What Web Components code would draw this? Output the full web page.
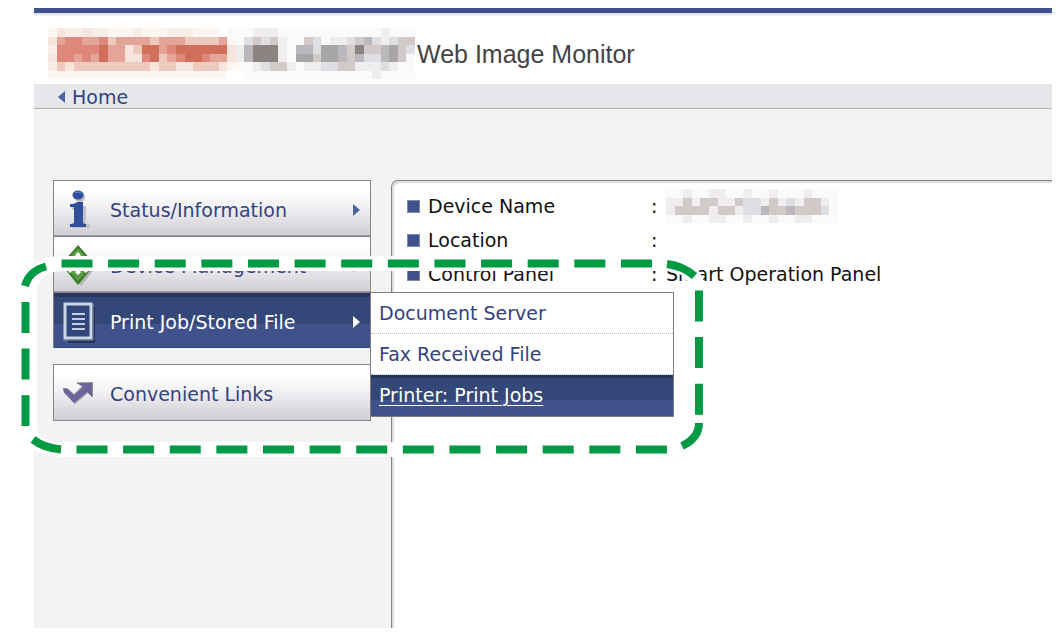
<!DOCTYPE html>
<html lang="en">
<head>
<meta charset="utf-8">
<title>Web Image Monitor</title>
<style>
  * { box-sizing: border-box; }
  body { margin: 0; background: #fff; color: #111; font: 19px/24px "DejaVu Sans", Verdana, sans-serif; }
</style>
</head>
<body>
<wim-page>
  <wim-header slot="header">
    <wim-mosaic slot="logo" kind="logo"></wim-mosaic>
    Web Image Monitor
  </wim-header>
  <wim-crumb slot="crumb" href="#home">Home</wim-crumb>
  <wim-menu slot="menu">
    <wim-menu-item href="#status" arrow>
      <svg slot="icon" width="34" height="40" viewBox="0 0 34 40" aria-hidden="true">
        <path d="M10 16h14v18h4v4H10v-4h4V20h-4z" fill="#c3c0c9"/>
        <circle cx="18" cy="7" r="5" fill="#b9b8c4"/>
        <ellipse cx="16" cy="5" rx="5.500" ry="4.500" fill="#31509c"/>
        <path d="M8 14q5 0 7-2h6v20q0 2 3 2v3H8v-3q4 0 4-2V17H8z" fill="#31509c"/>
        <path d="M13 3q3-2 6 0" stroke="#7189c1" fill="none"/>
      </svg>
      Status/Information
    </wim-menu-item>
    <wim-menu-item href="#device" arrow>
      <svg slot="icon" width="34" height="40" viewBox="0 0 34 40" aria-hidden="true">
        <path d="M19 3l15 18-15 19L4 22z" fill="#b5b3b8"/>
        <path d="M16-1l14 16v7L16 39 2 22v-7z" fill="#3d7e2d"/>
        <path d="M16 2l12 14v5L16 35 4 21v-5z" fill="#5c9c43"/>
        <path d="M16 6l3 3-3 3-3-3zM8 21l3 3-3 3-3-3zM24 21l3 3-3 3-3-3zM16 23l3 3-3 3-3-3z" fill="#fff"/>
      </svg>
      Device Management
    </wim-menu-item>
    <wim-menu-item href="#jobs" arrow active>
      <svg slot="icon" width="34" height="40" viewBox="0 0 34 40" aria-hidden="true">
        <path d="M6 5h27v36H6z" fill="#263459"/>
        <path d="M3 2h26v34H3z" fill="#31477c" stroke="#cbd8e5" stroke-width="3"/>
        <path d="M2 38h29V2" stroke="#7f94b3" fill="none"/>
        <path d="M10 12h13M10 17h13M10 22h13M10 27h13" stroke="#c3cfdf" stroke-width="2"/>
      </svg>
      Print Job/Stored File
      <wim-submenu slot="submenu">
        <wim-submenu-item href="#docserver">Document Server</wim-submenu-item>
        <wim-submenu-item href="#fax">Fax Received File</wim-submenu-item>
        <wim-submenu-item href="#printer" active>Printer: Print Jobs</wim-submenu-item>
      </wim-submenu>
    </wim-menu-item>
    <wim-menu-item href="#links" apart>
      <svg slot="icon" width="34" height="40" viewBox="0 0 34 40" aria-hidden="true">
        <path d="M1 15l4-1 7 6 8-8-6-3 17-1v15l-5-4-13 11L2 19z" fill="#a19fa8"/>
        <path d="M1 14l5 1 6 6 9-8-6-4h15v14l-5-5-13 11L2 18z" fill="#6c659c"/>
        <path d="M15 9h15v14" stroke="#777583" fill="none"/>
      </svg>
      Convenient Links
    </wim-menu-item>
  </wim-menu>
  <wim-panel slot="main">
    <wim-field label="Device Name"><wim-mosaic kind="name"></wim-mosaic></wim-field>
    <wim-field label="Location"></wim-field>
    <wim-field label="Control Panel">Smart Operation Panel</wim-field>
  </wim-panel>
</wim-page>
<wim-callout></wim-callout>

<script>
const define = (name, html, setup) => {
  const template = document.createElement('template');
  template.innerHTML = '<style>*{box-sizing:border-box}</style>' + html;
  customElements.define(name, class extends HTMLElement {
    connectedCallback() {
      if (this.shadowRoot) return;
      const root = this.attachShadow({ mode: 'open' });
      root.append(template.content.cloneNode(true));
      if (setup) setup(this, root);
    }
  });
};
const setHref = (el, root) => { root.querySelector('a').href = el.getAttribute('href'); };

define('wim-page', `
  <style>
    :host { display: flex; flex-direction: column; min-height: 100vh; padding: 8px 7px 8px 34px; }
    .content { flex: 1; display: flex; align-items: stretch; gap: 20px; padding: 71px 0 0 19px; background: #f3f3f3; }
    slot[name=menu]::slotted(*) { flex: none; }
    slot[name=main]::slotted(*) { flex: 1; min-width: 0; }
  </style>
  <slot name="header"></slot>
  <slot name="crumb"></slot>
  <main class="content"><slot name="menu"></slot><slot name="main"></slot></main>`);

define('wim-header', `
  <style>
    :host { display: block; border-top: 5px solid #40528c; }
    header { display: flex; align-items: center; gap: 2px; height: 71px; padding: 10px 14px 0; background: linear-gradient(#dadada, #fff 4px); }
    h1 { margin: 0; font: 25px/32px "Liberation Sans", Arial, sans-serif; color: #444; }
  </style>
  <header><slot name="logo"></slot><h1><slot></slot></h1></header>`);

define('wim-crumb', `
  <style>
    :host { display: block; height: 25px; padding-left: 24px; background: #e5e7eb; border-bottom: 1px solid #b2b2b5; }
    a { display: inline-flex; align-items: center; gap: 7px; color: #34437f; text-decoration: none; }
  </style>
  <nav><a><svg width="7" height="12" viewBox="0 0 7 12" aria-hidden="true"><path d="M7 0v12L0 6z" fill="#4b62a4"/></svg><slot></slot></a></nav>`, setHref);

define('wim-menu', `
  <style>:host { display: block; width: 318px; } nav { display: flex; flex-direction: column; }</style>
  <nav><slot></slot></nav>`);

define('wim-menu-item', `
  <style>
    :host { display: block; position: relative; height: 56px; border: solid #858388; border-width: 1px 1px 0; }
    :host([apart]) { height: 57px; margin-top: 16px; border-bottom-width: 1px; }
    a { display: flex; align-items: center; gap: 14px; height: 100%; padding: 3px 10px 0 8px; color: #34437f; text-decoration: none; white-space: nowrap; background: linear-gradient(#fff 20%, #f0eff2 50%, #d0ced4); border-bottom: 1px solid #9b989f; }
    :host([apart]) a { border-bottom: 0; }
    :host([active]) a { color: #fff; border-bottom-color: #34477c; background: linear-gradient(#26365f 4px, #344779 4px, #344779 31px, #40528c 31px); }
    .label { flex: 1; }
    .arrow { display: none; fill: #4b62a4; }
    :host([arrow]) .arrow { display: block; }
    :host([active]) .arrow { fill: #fff; }
    slot[name=icon]::slotted(svg) { overflow: visible; }
    slot[name=submenu]::slotted(*) { position: absolute; z-index: 1; top: -1px; left: 316px; }
  </style>
  <a><slot name="icon"></slot><span class="label"><slot></slot></span><svg class="arrow" width="7" height="12" viewBox="0 0 7 12" aria-hidden="true"><path d="M0 0v12l7-6z"/></svg></a>
  <slot name="submenu"></slot>`, setHref);

define('wim-submenu', `
  <style>:host { display: block; width: 304px; border: 1px solid #817b80; background: #fff; }</style>
  <slot></slot>`);

define('wim-submenu-item', `
  <style>
    :host { display: block; }
    a { display: block; height: 41px; padding: 8px 8px 0; color: #34437f; text-decoration: none; border-bottom: 1px dotted #bbb; white-space: nowrap; }
    :host([active]) a { color: #fff; text-decoration: underline; text-decoration-thickness: 1px; text-underline-offset: 3px; background: linear-gradient(#26365f 3px, #344779 3px, #344779 25px, #40528c 25px); border-bottom: 0; }
  </style>
  <a><slot></slot></a>`, setHref);

define('wim-panel', `
  <style>:host { display: block; padding: 8px 0 0 15px; background: #fff; border: solid #858585; border-width: 1px 0 0 1px; border-top-left-radius: 7px; box-shadow: inset 2px 2px 1px #ddd; } dl { margin: 0; }</style>
  <dl><slot></slot></dl>`);

define('wim-field', `
  <style>
    :host { display: grid; grid-template-columns: 13px 231px 15px 1fr; align-items: center; height: 34px; white-space: nowrap; }
    .bullet { width: 13px; height: 13px; background: #40528c; border: 1px solid #7f8bb2; }
    dt { padding-left: 8px; }
    dd { margin: 0; display: flex; }
  </style>
  <span class="bullet"></span><dt></dt><span>:</span><dd><slot></slot></dd>`,
  (el, root) => { root.querySelector('dt').textContent = el.getAttribute('label'); });

/* Coarse colour tiles; one letter per tile, a dot is blank. */
const palette = {
  a: '#fdf7f3', b: '#f6e5dc', c: '#edc9be', d: '#e4a598', e: '#de887b', f: '#d0705a', w: '#f9ede7',
  g: '#fafafa', h: '#efedee', i: '#dfdfe3', j: '#d2cac8', k: '#bab8bd', l: '#a8a5a7', m: '#8b8482'
};
const mosaics = {
  logo: { width: 367, height: 51, rows: [
    'abwwbwwaaawaaawwwaaa.ggghhhgggggggggggghggg',
    'bdeeddecddddcdddccccdagijijhggjighhijkihijjh',
    'weeeeefddbcffdeffffffbhkmmmhgkkillkjmjjklji',
    'beededfddbbefcdeffeddbhkmmmhglljllkjkiikljg',
    'wcbcccccccccbccbbcccbagghijjhghhiijjhhhihgg',
    'aaaaaaaaaaaaaaaaaaaaa..ggggggggggggggghgggg' ].map(row => row.slice(0, 43)) },
  name: { width: 172, height: 34, rows: [
    'gghgghhgghgghggghggg',
    'hhjhjjhhjiihjhihjjhg',
    'hjjjjhjjhiikjjkjjjig',
    'gghgghhgghgghgghhggg' ] }
};
define('wim-mosaic', `
  <style>:host { display: block; flex: none; } svg { display: block; }</style>
  <svg preserveAspectRatio="none" shape-rendering="crispEdges" aria-hidden="true"></svg>`,
  (el, root) => {
    const { width, height, rows } = mosaics[el.getAttribute('kind')];
    const svg = root.querySelector('svg');
    svg.setAttribute('width', width);
    svg.setAttribute('height', height);
    svg.setAttribute('viewBox', `0 0 ${rows[0].length} ${rows.length}`);
    svg.innerHTML = rows.map((row, y) => [...row].map((c, x) =>
      palette[c] ? `<rect x="${x}" y="${y}" width="1" height="1" fill="${palette[c]}"/>` : '').join('')).join('');
  });

define('wim-callout', `
  <style>:host { position: absolute; z-index: 2; top: 0; left: 0; pointer-events: none; } svg { display: block; }</style>
  <svg width="720" height="470" viewBox="0 0 720 470" fill="none" aria-hidden="true">
    <path d="M62 263.5H663Q699 263.5 699 299V413Q699 449.500 663 449.500H62Q29.500 449.500 29.500 422V299Q29.500 263.500 62 263.500z" stroke="#fff" stroke-width="15"/>
    <g stroke="#009944" stroke-width="8">
      <path d="M61.500 263.500H652" stroke-dasharray="31 15.620"/>
      <path d="M76.500 449.500H667" stroke-dasharray="31 15.620"/>
      <path d="M25.500 302V426M699 290.500V415" stroke-dasharray="31 15.620"/>
      <path d="M25 286Q29 271 46 266.500M667 264Q683 266 694.500 276M699 423Q699 438 682 446M33 439.500Q44 448 61 449.500"/>
    </g>
  </svg>`);
</script>
</body>
</html>
